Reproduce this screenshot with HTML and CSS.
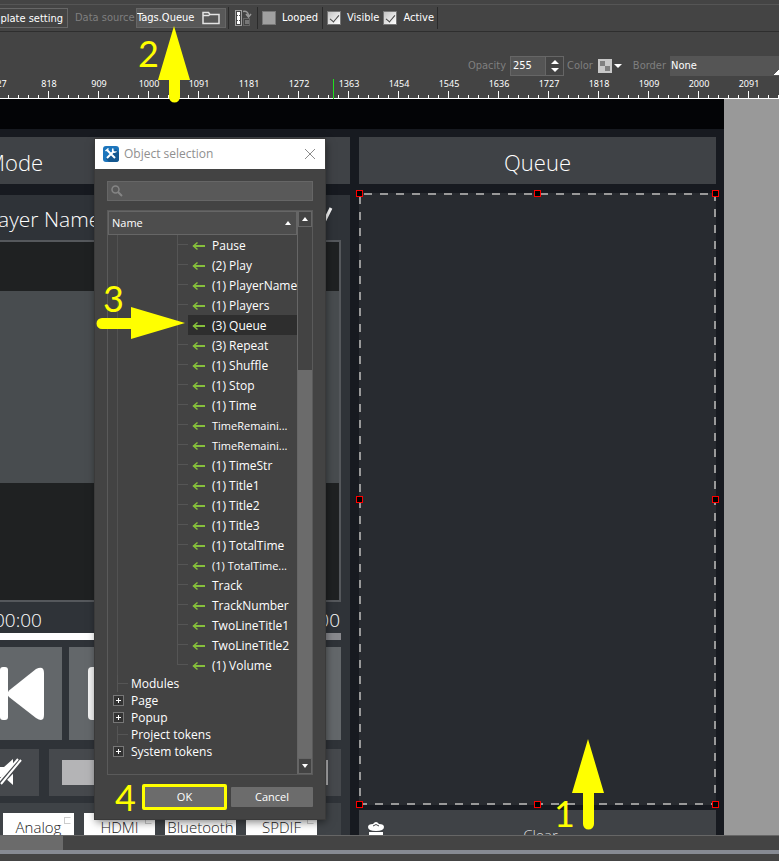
FILE: index.html
```html
<!DOCTYPE html>
<html lang="en">
<head>
<meta charset="utf-8">
<title>Project editor</title>
<link rel="stylesheet" href="styles.css">
</head>
<body>
<svg class="defs" aria-hidden="true">
  <symbol id="arrow" viewBox="0 0 14 10"><path d="M1.5 5H13" stroke-width="2"/><path d="M5.5 1.5 1.5 5l4 3.500" stroke-width="1.500"/></symbol>
</svg>

<header class="toolbar">
  <button class="template-btn" type="button">Template setting</button>
  <label class="dim source-label" for="source">Data source</label>
  <div class="source">
    <input id="source" type="text" value="Tags.Queue">
    <button class="icon-btn" type="button" aria-label="Browse">
      <svg width="18" height="14" viewBox="0 0 18 14" fill="none" stroke="#e4e4e4" stroke-width="1.500"><path d="M1 12.500V1.500H6.500L8 3.500H17V12.500ZM1 4.500H6.500L8 3.500"/></svg>
    </button>
  </div>
  <button class="icon-btn state-btn" type="button" aria-label="Copy state">
    <svg width="18" height="18" viewBox="0 0 18 18">
      <rect x="3" y="3" width="3" height="12" fill="#fff"/>
      <rect x="1.500" y="1.500" width="6" height="15" fill="none" stroke="#fff" stroke-dasharray="1 1"/>
      <path d="M3 6.500h4M3 11.500h4" stroke="#555" stroke-dasharray="1 1"/>
      <rect x="11" y="11" width="4" height="4" fill="#777"/>
      <rect x="9.500" y="9.500" width="6" height="7" fill="none" stroke="#888" stroke-dasharray="1 1"/>
      <path d="M9 2.500q5-1 5.500 4M12 5l2.500 3L17 5" fill="none" stroke="#999" stroke-width="1.500"/>
    </svg>
  </button>
  <label class="check"><input type="checkbox" class="off">Looped</label>
  <label class="check"><input type="checkbox" checked>Visible</label>
  <label class="check"><input type="checkbox" checked>Active</label>
</header>

<div class="properties">
  <label class="dim" for="opacity">Opacity</label>
  <div class="spin">
    <input id="opacity" type="text" value="255">
    <div class="spin-btns">
      <button type="button" aria-label="Increase"><svg width="8" height="4"><path d="M0 4 4 0l4 4z"/></svg></button>
      <button type="button" aria-label="Decrease"><svg width="8" height="4"><path d="M0 0h8L4 4z"/></svg></button>
    </div>
  </div>
  <span class="dim">Color</span>
  <button class="swatch" type="button" aria-label="Pick color">
    <svg width="24" height="14"><path fill="#c8c8c8" d="M0 0h14v14H0z"/><path fill="#808080" d="M2 2h5v5H2zM7 7h5v5H7z"/><path fill="#fff" d="M16 5h8l-4 4z"/></svg>
  </button>
  <label class="dim border-label" for="border">Border</label>
  <select id="border"><option>None</option></select>
</div>

<div class="ruler">
  <span>727</span><span>818</span><span>909</span><span>1000</span><span>1091</span><span>1181</span><span>1272</span><span>1363</span><span>1454</span><span>1545</span><span>1636</span><span>1727</span><span>1818</span><span>1909</span><span>2000</span><span>2091</span>
  <i class="cursor"></i>
</div>

<main class="canvas">
  <div class="page">
    <section class="left">
      <h2 class="mode">Mode</h2>
      <div class="player">
        <div class="player-name"><span>Player Name</span><svg width="14" height="18"><path d="M12 1 5 15" stroke="#fff" stroke-width="3"/></svg></div>
        <div class="display"><div class="cover"></div></div>
        <div class="times"><span>00:00</span><span>00:00</span></div>
        <div class="progress"></div>
        <div class="transport">
          <div class="tile prev"><svg width="46" height="54" fill="#fff"><rect width="8" height="53" rx="3"/><path d="M9 23.500 36 2q8-4 8 4v42q0 8-8 3L9 30q-3-3 0-6.500z"/></svg></div>
          <div class="tile stop"><svg width="53" height="53"><rect width="53" height="53" rx="4" fill="#f2f2f2"/></svg></div>
          <div class="tile"></div>
        </div>
        <div class="volume">
          <div class="mute"><svg width="26" height="28"><path d="M0 9h6l9-8v26l-9-8H0z" fill="#fff"/><path d="M1 26 24 2" stroke="#46494d" stroke-width="6"/><path d="M0 24 20 1M3 26 23 2" stroke="#fff" stroke-width="2"/></svg></div>
          <div class="level"><div></div></div>
        </div>
        <div class="outputs"><span>Analog</span><span>HDMI</span><span>Bluetooth</span><span>SPDIF</span></div>
      </div>
    </section>

    <section class="right">
      <h2 class="queue-title">Queue</h2>
      <div class="queue">
        <i class="h tl"></i><i class="h tc"></i><i class="h tr"></i>
        <i class="h ml"></i><i class="h mr"></i>
        <i class="h bl"></i><i class="h bc"></i><i class="h br"></i>
      </div>
      <div class="clear">
        <svg width="18" height="20"><path d="M1 6q0-3 5-3 3-4 6 0 5 0 5 3 0 4-8 4T1 6z" fill="#fff"/><path d="M6 5q3-3 6 0" stroke="#3f4246" fill="none"/><path d="M2 11h14v9H2z" fill="#fff"/></svg>
        <span>Clear</span>
      </div>
      <span class="step step1">1</span>
      <svg class="ptr1" viewBox="0 0 34 92"><path d="M17 1 1 55h11v31a5.500 5.500 0 0 0 11 0V55h10z" fill="#ff0"/></svg>
    </section>
  </div>
</main>

<footer class="footer"><div class="hscroll"><div></div></div><div class="splitter"></div></footer>

<div class="dialog" role="dialog" aria-label="Object selection">
  <div class="title">
    <svg width="16" height="16"><rect width="16" height="16" rx="3" fill="#1c75bc"/><path d="M3 13 13 3l3 4v6q0 3-3 3H6z" fill="#14578f"/><path d="m4 4 8 8M4 12l7-7" stroke="#fff" stroke-width="2"/><path d="M10 2.500q-1 3 .500 3.500t3-.500M2.500 5l3-2.500" stroke="#fff" stroke-width="1.500" fill="none"/></svg>
    <span>Object selection</span>
    <button type="button" aria-label="Close"><svg width="12" height="12"><path d="m1 1 10 10M11 1 1 11" stroke="#8b8b8b"/></svg></button>
  </div>
  <div class="search">
    <svg width="12" height="12" fill="none" stroke="#858585"><circle cx="4.500" cy="4.500" r="3.500" stroke-width="1.500"/><path d="m7 7 4 4" stroke-width="2"/></svg>
    <input type="text" aria-label="Search">
  </div>
  <div class="tree">
    <div class="list">
      <div class="head"><span>Name</span><svg width="6" height="4"><path d="M0 4 3 0l3 4z" fill="#fff"/></svg></div>
      <ul class="tags">
        <li><svg><use href="#arrow"/></svg>Pause</li>
        <li><svg><use href="#arrow"/></svg>(2) Play</li>
        <li><svg><use href="#arrow"/></svg>(1) PlayerName</li>
        <li><svg><use href="#arrow"/></svg>(1) Players</li>
        <li class="selected"><svg><use href="#arrow"/></svg>(3) Queue</li>
        <li><svg><use href="#arrow"/></svg>(3) Repeat</li>
        <li><svg><use href="#arrow"/></svg>(1) Shuffle</li>
        <li><svg><use href="#arrow"/></svg>(1) Stop</li>
        <li><svg><use href="#arrow"/></svg>(1) Time</li>
        <li class="small"><svg><use href="#arrow"/></svg>TimeRemaini...</li>
        <li class="small"><svg><use href="#arrow"/></svg>TimeRemaini...</li>
        <li><svg><use href="#arrow"/></svg>(1) TimeStr</li>
        <li><svg><use href="#arrow"/></svg>(1) Title1</li>
        <li><svg><use href="#arrow"/></svg>(1) Title2</li>
        <li><svg><use href="#arrow"/></svg>(1) Title3</li>
        <li><svg><use href="#arrow"/></svg>(1) TotalTime</li>
        <li class="small"><svg><use href="#arrow"/></svg>(1) TotalTime...</li>
        <li><svg><use href="#arrow"/></svg>Track</li>
        <li><svg><use href="#arrow"/></svg>TrackNumber</li>
        <li><svg><use href="#arrow"/></svg>TwoLineTitle1</li>
        <li><svg><use href="#arrow"/></svg>TwoLineTitle2</li>
        <li><svg><use href="#arrow"/></svg>(1) Volume</li>
      </ul>
      <ul class="roots">
        <li class="leaf">Modules</li>
        <li class="branch">Page</li>
        <li class="branch">Popup</li>
        <li class="leaf">Project tokens</li>
        <li class="branch">System tokens</li>
      </ul>
    </div>
    <div class="vscroll">
      <button type="button" aria-label="Scroll up"><svg width="6" height="4"><path d="M0 4 3 0l3 4z"/></svg></button>
      <div class="thumb"></div>
      <div class="track"></div>
      <button type="button" aria-label="Scroll down"><svg width="6" height="4"><path d="M0 0h6L3 4z"/></svg></button>
    </div>
  </div>
  <div class="actions">
    <span class="step-inline">4</span>
    <button class="ok" type="button">OK</button>
    <button class="cancel" type="button">Cancel</button>
  </div>
</div>

<span class="step step2">2</span>
<svg class="ptr2" viewBox="0 0 34 78"><path d="M17 1 1 55h11v17a5.500 5.500 0 0 0 11 0V55h10z" fill="#ff0"/></svg>
<span class="step step3">3</span>
<svg class="ptr3" viewBox="0 0 90 34"><path d="M89 17 35 1v11H6a5.500 5.500 0 0 0 0 11h29v10z" fill="#ff0"/></svg>
</body>
</html>
```
FILE: styles.css
```css
* { box-sizing: border-box; }

body {
  margin: 0;
  height: 100vh;
  display: flex;
  flex-direction: column;
  position: relative;
  overflow: hidden;
  background: #444;
  color: #fff;
  font: 11px/16px "DejaVu Sans Condensed", "DejaVu Sans", sans-serif;
}

button, input, select { font: inherit; color: inherit; margin: 0; }
button { padding: 0; border: 0; background: none; }
svg { display: block; flex: none; }
h2, ul { margin: 0; padding: 0; list-style: none; }
.defs { position: absolute; width: 0; height: 0; }
.dim { color: #7f7f7f; }

/* Toolbars */
.toolbar {
  flex: none;
  display: flex;
  align-items: center;
  height: 32px;
  padding-top: 4px;
  border-bottom: 1px solid #2e2e2e;
  background: linear-gradient(#555, #555) 0 4px / 100% 1px no-repeat;
}
.template-btn {
  flex: none;
  height: 20px;
  margin-left: -30px;
  padding: 2px 4px 0 0;
  width: 98px;
  text-align: right;
  border: 1px solid #666;
}
.source-label { margin-left: 7px; width: 61px; white-space: nowrap; }
.source { display: flex; align-items: center; width: 90px; height: 20px; background: #585858; border: 1px solid #666; }
.source input { width: 65px; height: 18px; padding: 0; border: 0; background: none; }
.state-btn { height: 22px; margin-left: 2px; padding: 2px 5px; border-left: 1px solid #2b2b2b; }
.check {
  display: flex;
  align-items: center;
  gap: 6px;
  height: 22px;
  padding: 0 4px;
  border-left: 1px solid #2b2b2b;
}
.check + .check + .check { border-left: 0; padding: 0 3px 0 0; }
.check:last-of-type { border-right: 1px solid #2b2b2b; }
.check input {
  appearance: none;
  width: 14px;
  height: 14px;
  border: 1px solid #777;
  background: linear-gradient(135deg, #c4c4c4, #fff);
}
.check .off { background: #a0a0a0; }
.check input:checked::before {
  content: "";
  display: block;
  width: 4px;
  height: 8px;
  margin: 1px 0 0 4px;
  border: solid #444;
  border-width: 0 1px 1px 0;
  transform: rotate(40deg);
}

.properties {
  flex: none;
  display: flex;
  justify-content: flex-end;
  align-items: center;
  height: 45px;
  padding-top: 23px;
}
.spin { display: flex; width: 54px; height: 20px; margin: 0 3px 0 4px; border: 1px solid #666; }
.spin input { width: 35px; padding: 0 2px; border: 0; border-right: 1px solid #666; background: #555; }
.spin-btns { flex: 1; display: flex; flex-direction: column; justify-content: space-between; align-items: center; padding: 3px 0; fill: #fff; }
.swatch { margin-left: 5px; }
.border-label { margin: 0 4px 0 11px; }
.properties select {
  appearance: none;
  width: 109px;
  height: 20px;
  padding: 0 1px;
  border: 0;
  border-radius: 0;
  background: linear-gradient(135deg, transparent 50%, #fff 50%) right bottom 1px / 5px 5px no-repeat #555;
}

.ruler {
  flex: none;
  position: relative;
  display: flex;
  height: 22px;
  overflow: hidden;
  font: 9px/14px "Noto Sans", sans-serif;
  background:
    linear-gradient(#fff, #fff) 0 100% / 100% 1px no-repeat,
    linear-gradient(90deg, #fff 1px, transparent 1px) -2px 100% / 50px 8px repeat-x,
    linear-gradient(90deg, #fff 1px, transparent 1px) -2px 100% / 10px 4px repeat-x;
}
.ruler span { flex: 0 0 50px; text-align: center; }
.ruler span:first-child { margin-left: -26px; }
.cursor { position: absolute; left: 333px; top: 2px; width: 1px; height: 20px; background: #1fe01f; }

/* Canvas */
.canvas { flex: 1; min-height: 0; display: flex; overflow: hidden; background: #999; }
.page {
  flex: 1;
  min-width: 0;
  margin-right: 55px;
  display: grid;
  grid-template-columns: minmax(0, 1fr) 357px;
  gap: 9px;
  padding: 8px 8px 0 0;
  border-top: 30px solid #030406;
  background: #171a20;
  font-family: "Open Sans", "Noto Sans", sans-serif;
  font-weight: 300;
}
.left, .right { display: flex; flex-direction: column; min-height: 0; min-width: 0; }
.mode, .queue-title { flex: none; height: 47px; background: #3f4246; font-size: 22px; font-weight: 300; line-height: 50px; }
.mode { text-indent: -14px; }
.queue-title { text-align: center; }
.player {
  flex: 1;
  min-height: 0;
  display: flex;
  flex-direction: column;
  margin-top: 11px;
  padding-right: 9px;
  background: #2f3338;
}
.player-name { flex: none; display: flex; justify-content: space-between; height: 45px; padding-top: 10px; font-size: 21px; line-height: 28px; white-space: nowrap; }
.player-name span { margin-left: -19px; }
.player-name svg { margin: 2px 8px 0 0; }
.display {
  flex: 1;
  display: flex;
  padding: 49px 0 117px;
  border: solid #55585c;
  border-width: 2px 2px 2px 0;
  background: #1f2122;
}
.cover { flex: 1; background: #484c4f; }
.times { flex: none; display: flex; justify-content: space-between; height: 31px; font-size: 19px; line-height: 36px; padding-right: 1px; }
.times span:first-child { margin-left: -6px; }
.progress { flex: none; height: 7px; background: linear-gradient(90deg, #fff 300px, #88898d 300px); }
.transport { flex: none; display: grid; grid-template-columns: 62px 93px 1fr; gap: 7px; height: 93px; margin-top: 7px; }
.tile { background: #63676a; overflow: hidden; }
.prev { padding: 20px 0 0; }
.stop { padding: 20px 19px; }
.volume { flex: none; display: flex; gap: 10px; height: 47px; margin-top: 9px; }
.mute { width: 39px; padding: 9px 0 0; background: #46494d; }
.mute svg { margin-left: -2px; }
.level { flex: 1; padding: 11px 13px; background: #46494d; }
.level div { height: 25px; background: #b4b4b6; }
.outputs { flex: none; display: flex; gap: 10px; height: 32px; margin-top: 7px; padding: 10px 0 0 3px; background: #3f4347; }
.outputs span {
  position: relative;
  flex: 0 0 71px;
  height: 22px;
  text-align: center;
  font-size: 15px;
  line-height: 28px;
  color: #222;
  background: #fff;
}
.outputs span::after {
  content: "";
  position: absolute;
  right: 3px;
  top: 4px;
  width: 5px;
  height: 5px;
  border: 1px solid #ccc;
  border-right-color: transparent;
}

.right { position: relative; }
.queue {
  position: relative;
  flex: 1;
  margin: 9px 0 5px;
  background:
    repeating-linear-gradient(90deg, #999 0 8px, transparent 8px 16px) 5px 0 / 352px 2px no-repeat,
    repeating-linear-gradient(90deg, #999 0 8px, transparent 8px 16px) 0 100% / 100% 2px no-repeat,
    repeating-linear-gradient(#999 0 8px, transparent 8px 16px) 0 3px / 2px 100% no-repeat,
    repeating-linear-gradient(#999 0 8px, transparent 8px 16px) 100% 0 / 2px 100% no-repeat,
    #282b30;
}
.h { position: absolute; width: 7px; height: 7px; border: 1px solid #f00; background: #000; }
.tl, .ml, .bl { left: -3px; }
.tc, .bc { left: 0; right: 0; margin: 0 auto; }
.tr, .mr, .br { right: -3px; }
.tl, .tc, .tr { top: -3px; }
.ml, .mr { top: 0; bottom: 0; margin: auto 0; }
.bl, .bc, .br { bottom: -3px; }
.clear { flex: none; display: grid; grid-template-columns: 18px 1fr 12px; height: 47px; margin-bottom: -22px; padding: 11px 8px 0; background: #3f4246; }
.clear span { text-align: center; font-size: 15px; line-height: 28px; color: #ddd; }

/* Bottom edge */
.footer { flex: none; position: relative; height: 26px; background: #444; }
.hscroll { height: 15px; border-top: 1px solid #666; }
.hscroll div { width: 63px; height: 14px; background: #6b6b6b; }
.splitter { height: 4px; background: #868a93; }

/* Object selection dialog */
.dialog {
  position: absolute;
  left: 95px;
  top: 139px;
  width: 230px;
  background: #434343;
  box-shadow: 0 0 0 1px #3a3a3a, 1px 3px 8px rgba(0, 0, 0, .5);
  font: 12px/20px "Open Sans", "Noto Sans", sans-serif;
}
.title { display: flex; align-items: center; gap: 5px; height: 30px; padding: 0 9px 0 8px; background: #fff; color: #8f8f8f; }
.title button { margin-left: auto; }
.search { display: flex; align-items: center; height: 20px; margin: 12px 12px 9px; padding: 0 3px; border: 1px solid #666; background: #595959; }
.search input { flex: 1; min-width: 0; padding: 0 4px; border: 0; background: none; }
.tree { display: flex; height: 565px; margin: 0 12px; border: 1px solid #5a5a5a; }
.list { flex: 1; min-width: 0; background: linear-gradient(#525252, #525252) 9px 0 / 1px 480px no-repeat; }
.head { display: flex; align-items: center; justify-content: space-between; height: 24px; padding: 0 5px 0 3px; border: 1px solid #666; background: #4d4d4d; font-size: 11px; }
.tags { margin-left: 69px; background: linear-gradient(#555, #555) 0 0 / 1px 430px no-repeat; }
.tags li {
  display: flex;
  align-items: center;
  gap: 6px;
  height: 20px;
  padding: 2px 0 0 15px;
  white-space: nowrap;
  background: linear-gradient(#555, #555) 0 9px / 11px 1px no-repeat;
}
.tags svg { width: 14px; height: 10px; fill: none; stroke: #86bf3b; }
.tags .selected { background: linear-gradient(90deg, transparent 11px, #2e2e2e 11px); }
.tags .small { font-size: 11px; }
.roots li { position: relative; height: 17px; padding-left: 23px; line-height: 17px; }
.leaf { background: linear-gradient(#555, #555) 9px 8px / 11px 1px no-repeat, linear-gradient(#555, #555) 9px 0 / 1px 100% no-repeat; }
.branch::before {
  content: "";
  position: absolute;
  left: 5px;
  top: 3px;
  width: 9px;
  height: 9px;
  border: 1px solid #777;
  background:
    linear-gradient(#fff, #fff) 50% 50% / 5px 1px no-repeat,
    linear-gradient(#fff, #fff) 50% 50% / 1px 5px no-repeat,
    #333;
}
.vscroll { flex: 0 0 15px; display: flex; flex-direction: column; border-left: 1px solid #666; fill: #fff; }
.vscroll button { display: flex; align-items: center; justify-content: center; height: 16px; border: 1px solid #666; background: #434343; }
.thumb { height: 143px; background: #434343; }
.track { flex: 1; background: #6b6b6b; }
.actions { display: flex; align-items: center; height: 44px; padding: 0 12px 0 20px; font-size: 11px; }
.actions button { height: 20px; background: #6c6c6c; }
.step-inline { width: 27px; font: 36px/40px Lato, sans-serif; color: #ff0; }
.actions .ok { width: 85px; height: 26px; border: 3px solid #ff0; border-radius: 2px; margin-right: 4px; }
.actions .cancel { flex: 1; border-radius: 1px; }

/* Numbered callouts */
.step { position: absolute; font: 36px/40px Lato, sans-serif; color: #ff0; }
.step1 { left: 195px; bottom: 2px; }
.ptr1 { position: absolute; left: 212px; bottom: 5px; width: 34px; height: 92px; }
.step2 { left: 138px; top: 33px; }
.ptr2 { position: absolute; left: 157px; top: 25px; width: 34px; height: 78px; }
.step3 { left: 103px; top: 278px; }
.ptr3 { position: absolute; left: 96px; top: 306px; width: 90px; height: 34px; }
```
